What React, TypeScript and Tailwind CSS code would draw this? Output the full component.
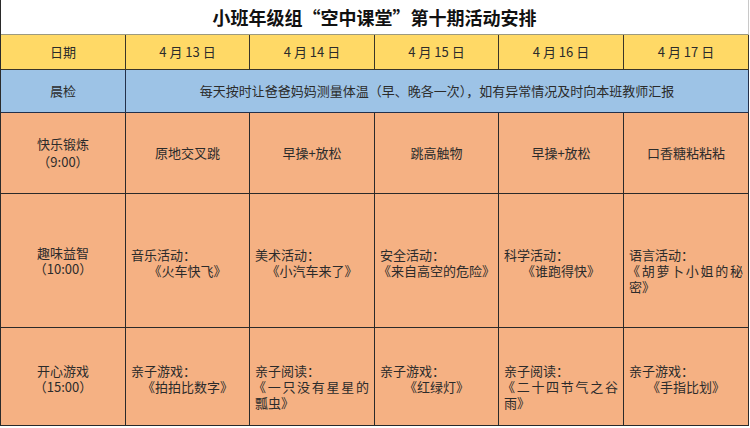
import React from "react";

const font = { fontFamily: '"Noto Sans CJK SC", "Noto Sans", sans-serif' };

const dates = ["4 月 13 日", "4 月 14 日", "4 月 15 日", "4 月 16 日", "4 月 17 日"];
const exercise = ["原地交叉跳", "早操+放松", "跳高触物", "早操+放松", "口香糖粘粘粘"];

type Act = { head: string; line2?: string; just?: string; line3?: string };

const row4: Act[] = [
  { head: "音乐活动：", line2: "《火车快飞》" },
  { head: "美术活动：", line2: "《小汽车来了》" },
  { head: "安全活动：", line2: "《来自高空的危险》" },
  { head: "科学活动：", line2: "《谁跑得快》" },
  { head: "语言活动：", just: "《胡萝卜小姐的秘", line3: "密》" },
];

const row5: Act[] = [
  { head: "亲子游戏：", line2: "《拍拍比数字》" },
  { head: "亲子阅读：", just: "《一只没有星星的", line3: "瓢虫》" },
  { head: "亲子游戏：", line2: "《红绿灯》" },
  { head: "亲子阅读：", just: "《二十四节气之谷", line3: "雨》" },
  { head: "亲子游戏：", line2: "《手指比划》" },
];

function ActCell({ a }: { a: Act }) {
  return (
    <div className="bg-[#f5b183] border-b border-r border-[#2a2a2a] flex items-center">
      <div className="w-full h-[32px] mt-[4px] px-[5px] text-[13px] leading-[16px] text-[#2b2b2b] overflow-visible">
        <div>{a.head}</div>
        {a.line2 && <div className="text-center -mx-[4px]">{a.line2}</div>}
        {a.just && (
          <div className="flex justify-between -ml-[2px]">
            {Array.from(a.just).map((c, i) => (
              <span key={i}>{c}</span>
            ))}
          </div>
        )}
        {a.line3 && <div>{a.line3}</div>}
      </div>
    </div>
  );
}

export default function App() {
  return (
    <div className="w-[750px] h-[428px] bg-white" style={font}>
      <div className="w-[749px] border-l border-[#2a2a2a]">
        {/* title */}
        <div className="h-[35px] border-b border-r border-b-[#9c9a80] border-r-[#c8c8c8] flex items-center justify-center">
          <span className="text-[18px] font-semibold text-[#111]">
            小班年级组“空中课堂”第十期活动安排
          </span>
        </div>
        <div className="grid grid-cols-[125px_124px_125px_124px_125px_125px] text-[13px] text-[#2b2b2b]">
          {/* date row */}
          <div className="h-[35px] bg-[#ffd966] border-r border-b border-[#3a3528] flex items-center justify-center">
            日期
          </div>
          {dates.map((d) => (
            <div
              key={d}
              className="h-[35px] bg-[#ffd966] border-r border-b border-[#3a3528] flex items-center justify-center"
            >
              {d}
            </div>
          ))}
          {/* morning check */}
          <div className="h-[43px] bg-[#9dc3e6] border-r border-b border-[#23304a] flex items-center justify-center">
            晨检
          </div>
          <div className="col-span-5 h-[43px] bg-[#9dc3e6] border-r border-b border-[#23304a] flex items-center justify-center">
            每天按时让爸爸妈妈测量体温（早、晚各一次），如有异常情况及时向本班教师汇报
          </div>
          {/* exercise */}
          <div className="h-[81px] bg-[#f5b183] border-r border-b border-[#2a2a2a] flex flex-col items-center justify-center leading-[18px]">
            <div>快乐锻炼</div>
            <div>（9:00）</div>
          </div>
          {exercise.map((e, i) => (
            <div
              key={i}
              className="h-[81px] bg-[#f5b183] border-r border-b border-[#2a2a2a] flex items-center justify-center"
            >
              {e}
            </div>
          ))}
          {/* row 4 */}
          <div className="h-[134px] bg-[#f5b183] border-r border-b border-[#2a2a2a] flex flex-col items-center justify-center leading-[16px]">
            <div>趣味益智</div>
            <div>（10:00）</div>
          </div>
          {row4.map((a, i) => (
            <ActCell key={i} a={a} />
          ))}
          {/* row 5 */}
          <div className="h-[98px] bg-[#f5b183] border-r border-b border-[#2a2a2a] flex flex-col items-center justify-center leading-[16px]">
            <div className="mt-[4px]">开心游戏</div>
            <div>（15:00）</div>
          </div>
          {row5.map((a, i) => (
            <ActCell key={i} a={a} />
          ))}
        </div>
      </div>
    </div>
  );
}
